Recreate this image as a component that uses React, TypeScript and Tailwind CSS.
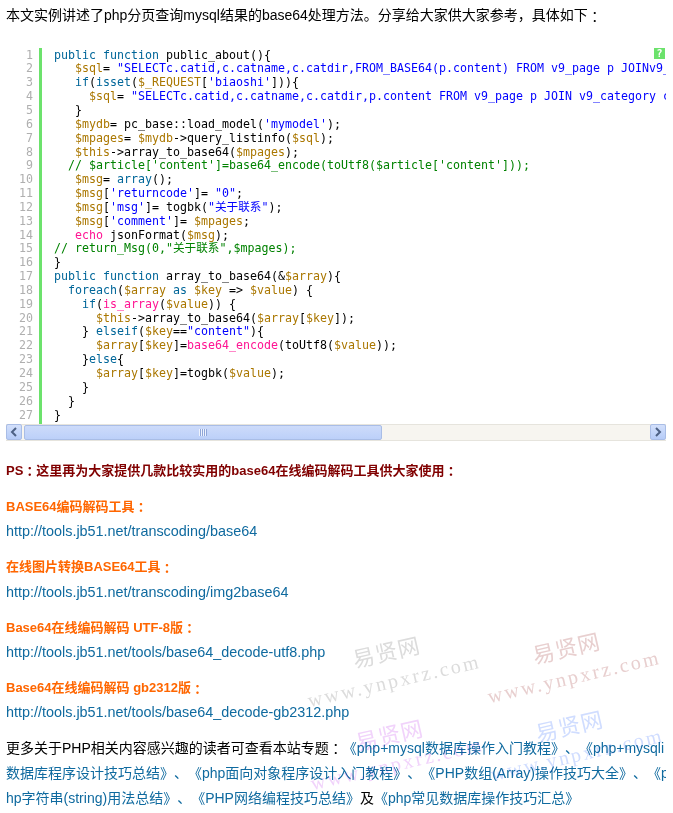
const tone = {
  k: "text-[#006699]",
  v: "text-[#aa7700]",
  s: "text-[#0000ff]",
  c: "text-[#008200]",
  f: "text-[#ff1493]",
  p: "text-[#000000]",
};

type Seg = [keyof typeof tone, string];

const code: Seg[][] = [
  [["k", "public function "], ["p", "public_about(){"]],
  [["p", "   "], ["v", "$sql"], ["p", "= "], ["s", '"SELECTc.catid,c.catname,c.catdir,FROM_BASE64(p.content) FROM v9_page p JOINv9_category c ON p.catid=c.catid"'], ["p", ";"]],
  [["p", "   "], ["k", "if"], ["p", "("], ["k", "isset"], ["p", "("], ["v", "$_REQUEST"], ["p", "["], ["s", "'biaoshi'"], ["p", "])){"]],
  [["p", "     "], ["v", "$sql"], ["p", "= "], ["s", '"SELECTc.catid,c.catname,c.catdir,p.content FROM v9_page p JOIN v9_category c ON p.catid=c.catid"'], ["p", ";"]],
  [["p", "   }"]],
  [["p", "   "], ["v", "$mydb"], ["p", "= pc_base::load_model("], ["s", "'mymodel'"], ["p", ");"]],
  [["p", "   "], ["v", "$mpages"], ["p", "= "], ["v", "$mydb"], ["p", "->query_listinfo("], ["v", "$sql"], ["p", ");"]],
  [["p", "   "], ["v", "$this"], ["p", "->array_to_base64("], ["v", "$mpages"], ["p", ");"]],
  [["p", "  "], ["c", "// $article['content']=base64_encode(toUtf8($article['content']));"]],
  [["p", "   "], ["v", "$msg"], ["p", "= "], ["k", "array"], ["p", "();"]],
  [["p", "   "], ["v", "$msg"], ["p", "["], ["s", "'returncode'"], ["p", "]= "], ["s", '"0"'], ["p", ";"]],
  [["p", "   "], ["v", "$msg"], ["p", "["], ["s", "'msg'"], ["p", "]= togbk("], ["s", '"关于联系"'], ["p", ");"]],
  [["p", "   "], ["v", "$msg"], ["p", "["], ["s", "'comment'"], ["p", "]= "], ["v", "$mpages"], ["p", ";"]],
  [["p", "   "], ["f", "echo"], ["p", " jsonFormat("], ["v", "$msg"], ["p", ");"]],
  [["c", '// return_Msg(0,"关于联系",$mpages);']],
  [["p", "}"]],
  [["k", "public function "], ["p", "array_to_base64(&"], ["v", "$array"], ["p", "){"]],
  [["p", "  "], ["k", "foreach"], ["p", "("], ["v", "$array"], ["p", " "], ["k", "as"], ["p", " "], ["v", "$key"], ["p", " => "], ["v", "$value"], ["p", ") {"]],
  [["p", "    "], ["k", "if"], ["p", "("], ["f", "is_array"], ["p", "("], ["v", "$value"], ["p", ")) {"]],
  [["p", "      "], ["v", "$this"], ["p", "->array_to_base64("], ["v", "$array"], ["p", "["], ["v", "$key"], ["p", "]);"]],
  [["p", "    } "], ["k", "elseif"], ["p", "("], ["v", "$key"], ["p", "=="], ["s", '"content"'], ["p", "){"]],
  [["p", "      "], ["v", "$array"], ["p", "["], ["v", "$key"], ["p", "]="], ["f", "base64_encode"], ["p", "(toUtf8("], ["v", "$value"], ["p", "));"]],
  [["p", "    }"], ["k", "else"], ["p", "{"]],
  [["p", "      "], ["v", "$array"], ["p", "["], ["v", "$key"], ["p", "]=togbk("], ["v", "$value"], ["p", ");"]],
  [["p", "    }"]],
  [["p", "  }"]],
  [["p", "}"]],
];

const tools = [
  ["BASE64编码解码工具", "http://tools.jb51.net/transcoding/base64"],
  ["在线图片转换BASE64工具", "http://tools.jb51.net/transcoding/img2base64"],
  ["Base64在线编码解码 UTF-8版", "http://tools.jb51.net/tools/base64_decode-utf8.php"],
  ["Base64在线编码解码 gb2312版", "http://tools.jb51.net/tools/base64_decode-gb2312.php"],
];

// the JP face centres the full-width colon, like the page's original font
function Colon() {
  return <span className="relative top-[1.5px] leading-none font-['Noto_Sans_CJK_JP',sans-serif]">：</span>;
}

function Watermark({ pos, color }: { pos: string; color: string }) {
  return (
    <div className={`absolute pointer-events-none mix-blend-multiply origin-bottom-left -rotate-[13deg] ${pos} ${color}`}>
      <div className="pl-[53px] text-[22px] leading-[30px] tracking-[1px] whitespace-nowrap">易贤网</div>
      <div className="text-[20px] leading-[27px] tracking-[2.5px] whitespace-nowrap font-['Liberation_Serif',serif]">www.ynpxrz.com</div>
    </div>
  );
}

function ArrowBtn({ d }: { d: string }) {
  return (
    <div className="w-[16px] h-[16px] shrink-0 flex items-center justify-center rounded-[2px] border border-[#a9bde6] bg-gradient-to-b from-[#d3e0fb] to-[#b6ccf8]">
      <svg width="8" height="10" viewBox="0 0 8 10">
        <path d={d} fill="none" stroke="#4d6185" strokeWidth="2" />
      </svg>
    </div>
  );
}

export default function App() {
  return (
    <div className="relative w-[673px] h-[813px] overflow-hidden bg-white pl-[6px] pr-[7px] text-[14px] leading-[25.2px] text-black [text-spacing-trim:space-all] font-['Liberation_Sans','Noto_Sans_CJK_SC',sans-serif]">
      <p className="pt-[3.4px] whitespace-nowrap">本文实例讲述了php分页查询mysql结果的base64处理方法。分享给大家供大家参考，具体如下<Colon /></p>

      <div className="relative mt-[19px] h-[376px] overflow-hidden flex font-['DejaVu_Sans_Mono','Noto_Sans_CJK_SC',monospace] text-[11.63px] leading-[13.85px]">
        <div className="w-[27px] pt-[1px] pr-[6px] text-right text-[#afafaf] shrink-0 border-r-[3px] border-[#6ce26c] box-content">
          {code.map((_, i) => (
            <div key={i} className="h-[13.85px]">{i + 1}</div>
          ))}
        </div>
        <div className="flex-1 min-w-0 pt-[1px] pl-[12px] overflow-hidden">
          {code.map((line, i) => (
            <div key={i} className="h-[13.85px] whitespace-pre">
              {line.map(([t, text], j) => (
                <span key={j} className={tone[t]}>{text}</span>
              ))}
            </div>
          ))}
        </div>
        <div className="absolute right-[1px] top-0 w-[11px] h-[11px] bg-[#6ce26c] text-white text-[10px] leading-[11px] text-center font-bold">?</div>
      </div>

      <div className="h-[17px] flex items-center bg-[#f7f5f0] border-y border-[#e6e4dd]">
        <ArrowBtn d="M6 1 L2 5 L6 9" />
        <div className="ml-[2px] w-[358px] h-[15px] flex items-center justify-center rounded-[2px] border border-[#a9bde6] bg-gradient-to-b from-[#cddbfa] to-[#bcd0f9]">
          <div className="w-[8px] h-[7px] bg-[repeating-linear-gradient(90deg,#eef3fe_0,#eef3fe_1px,#8fa6d8_1px,#8fa6d8_2px)]" />
        </div>
        <div className="flex-1" />
        <ArrowBtn d="M2 1 L6 5 L2 9" />
      </div>

      <p className="mt-[17.4px] text-[13px] font-bold text-[#800000] whitespace-nowrap">PS<Colon />这里再为大家提供几款比较实用的base64在线编码解码工具供大家使用<Colon /></p>

      <div className="mt-[10.8px] flex flex-col gap-[10px]">
        {tools.map(([title, url]) => (
          <div key={url}>
            <div className="text-[13px] font-bold text-[#ff6600] whitespace-nowrap">{title}<Colon /></div>
            <div className="text-[14.4px] text-[#0f6a9f] whitespace-nowrap">{url}</div>
          </div>
        ))}
      </div>

      <div className="mt-[10px] text-[#0f6a9f] whitespace-nowrap">
        <div className="overflow-hidden"><span className="text-black">更多关于PHP相关内容感兴趣的读者可查看本站专题<Colon /></span>《php+mysql数据库操作入门教程》、《php+mysqli</div>
        <div className="overflow-hidden">数据库程序设计技巧总结》、《php面向对象程序设计入门教程》、《PHP数组(Array)操作技巧大全》、《p</div>
        <div className="overflow-hidden">hp字符串(string)用法总结》、《PHP网络编程技巧总结》<span className="text-black">及</span>《php常见数据库操作技巧汇总》</div>
      </div>

      <Watermark pos="left-[311px] top-[657px]" color="text-[#dcdcdc]" />
      <Watermark pos="left-[491px] top-[653px]" color="text-[#e8cfcf]" />
      <Watermark pos="left-[314px] top-[740px]" color="text-[#f1d3fb]" />
      <Watermark pos="left-[494px] top-[731px]" color="text-[#d0ddff]" />
    </div>
  );
}
